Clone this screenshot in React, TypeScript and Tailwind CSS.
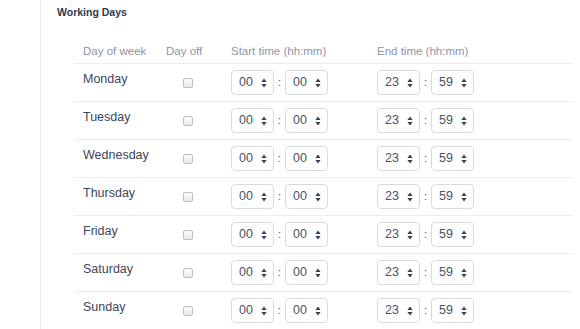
import { Fragment } from "react";

const DAYS = [
  "Monday",
  "Tuesday",
  "Wednesday",
  "Thursday",
  "Friday",
  "Saturday",
  "Sunday",
] as const;

function Spinner() {
  return (
    <svg width="6" height="10" viewBox="0 0 6 10" className="shrink-0">
      <path d="M3 0.5 L5.6 4 L0.4 4 Z" fill="#3b4257" />
      <path d="M3 9.5 L5.6 6 L0.4 6 Z" fill="#3b4257" />
    </svg>
  );
}

function TimeSelect({ value }: { value: string }) {
  return (
    <div className="flex h-[25px] w-[43px] items-center justify-between rounded-[4px] border border-[#d7dae0] bg-white pl-[7px] pr-[6px] text-[12.5px] text-[#4a5166]">
      <span>{value}</span>
      <Spinner />
    </div>
  );
}

function TimePair({ h, m }: { h: string; m: string }) {
  return (
    <div className="flex items-center gap-[4px]">
      <TimeSelect value={h} />
      <span className="w-[3px] text-[11px] text-[#4a5166]">:</span>
      <TimeSelect value={m} />
    </div>
  );
}

export default function App() {
  return (
    <div
      className="flex h-[329px] w-[580px] overflow-hidden bg-white"
      style={{ fontFamily: '"Liberation Sans", Arial, sans-serif' }}
    >
      <div className="w-[40px] shrink-0" />
      <div className="flex-1 border-l border-[#ebebef] pl-[16px]">
        {/* Section title */}
        <h2 className="pt-[5px] text-[10.5px] leading-[14px] font-bold text-[#30374f]">
          Working Days
        </h2>

        <div className="mt-[17px] ml-[17px] w-[499px]">
          {/* Header */}
          <div className="grid h-[28px] grid-cols-[83px_65px_146px_1fr] items-start border-b border-[#ececf0] pt-[8px] text-[11.5px] leading-[14px] text-[#8e94a3]">
            <span className="pl-[9px]">Day of week</span>
            <span className="pl-[9px]">Day off</span>
            <span className="pl-[9px]">Start time (hh:mm)</span>
            <span className="pl-[9px]">End time (hh:mm)</span>
          </div>

          {DAYS.map((day) => (
            <Fragment key={day}>
              <div className="grid h-[38px] grid-cols-[83px_65px_146px_1fr] items-start border-b border-[#ececf0] pt-[6px]">
                <span className="pl-[9px] pt-[1px] text-[12.5px] leading-[16px] text-[#3e4558]">
                  {day}
                </span>
                <div className="pl-[26px] pt-[8px]">
                  <div className="h-[10px] w-[10px] rounded-[2px] border border-[#b9bdc5] bg-gradient-to-b from-[#fafafa] to-[#e9e9ec]" />
                </div>
                <div className="pl-[9px]">
                  <TimePair h="00" m="00" />
                </div>
                <div className="pl-[9px]">
                  <TimePair h="23" m="59" />
                </div>
              </div>
            </Fragment>
          ))}
        </div>
      </div>
    </div>
  );
}
